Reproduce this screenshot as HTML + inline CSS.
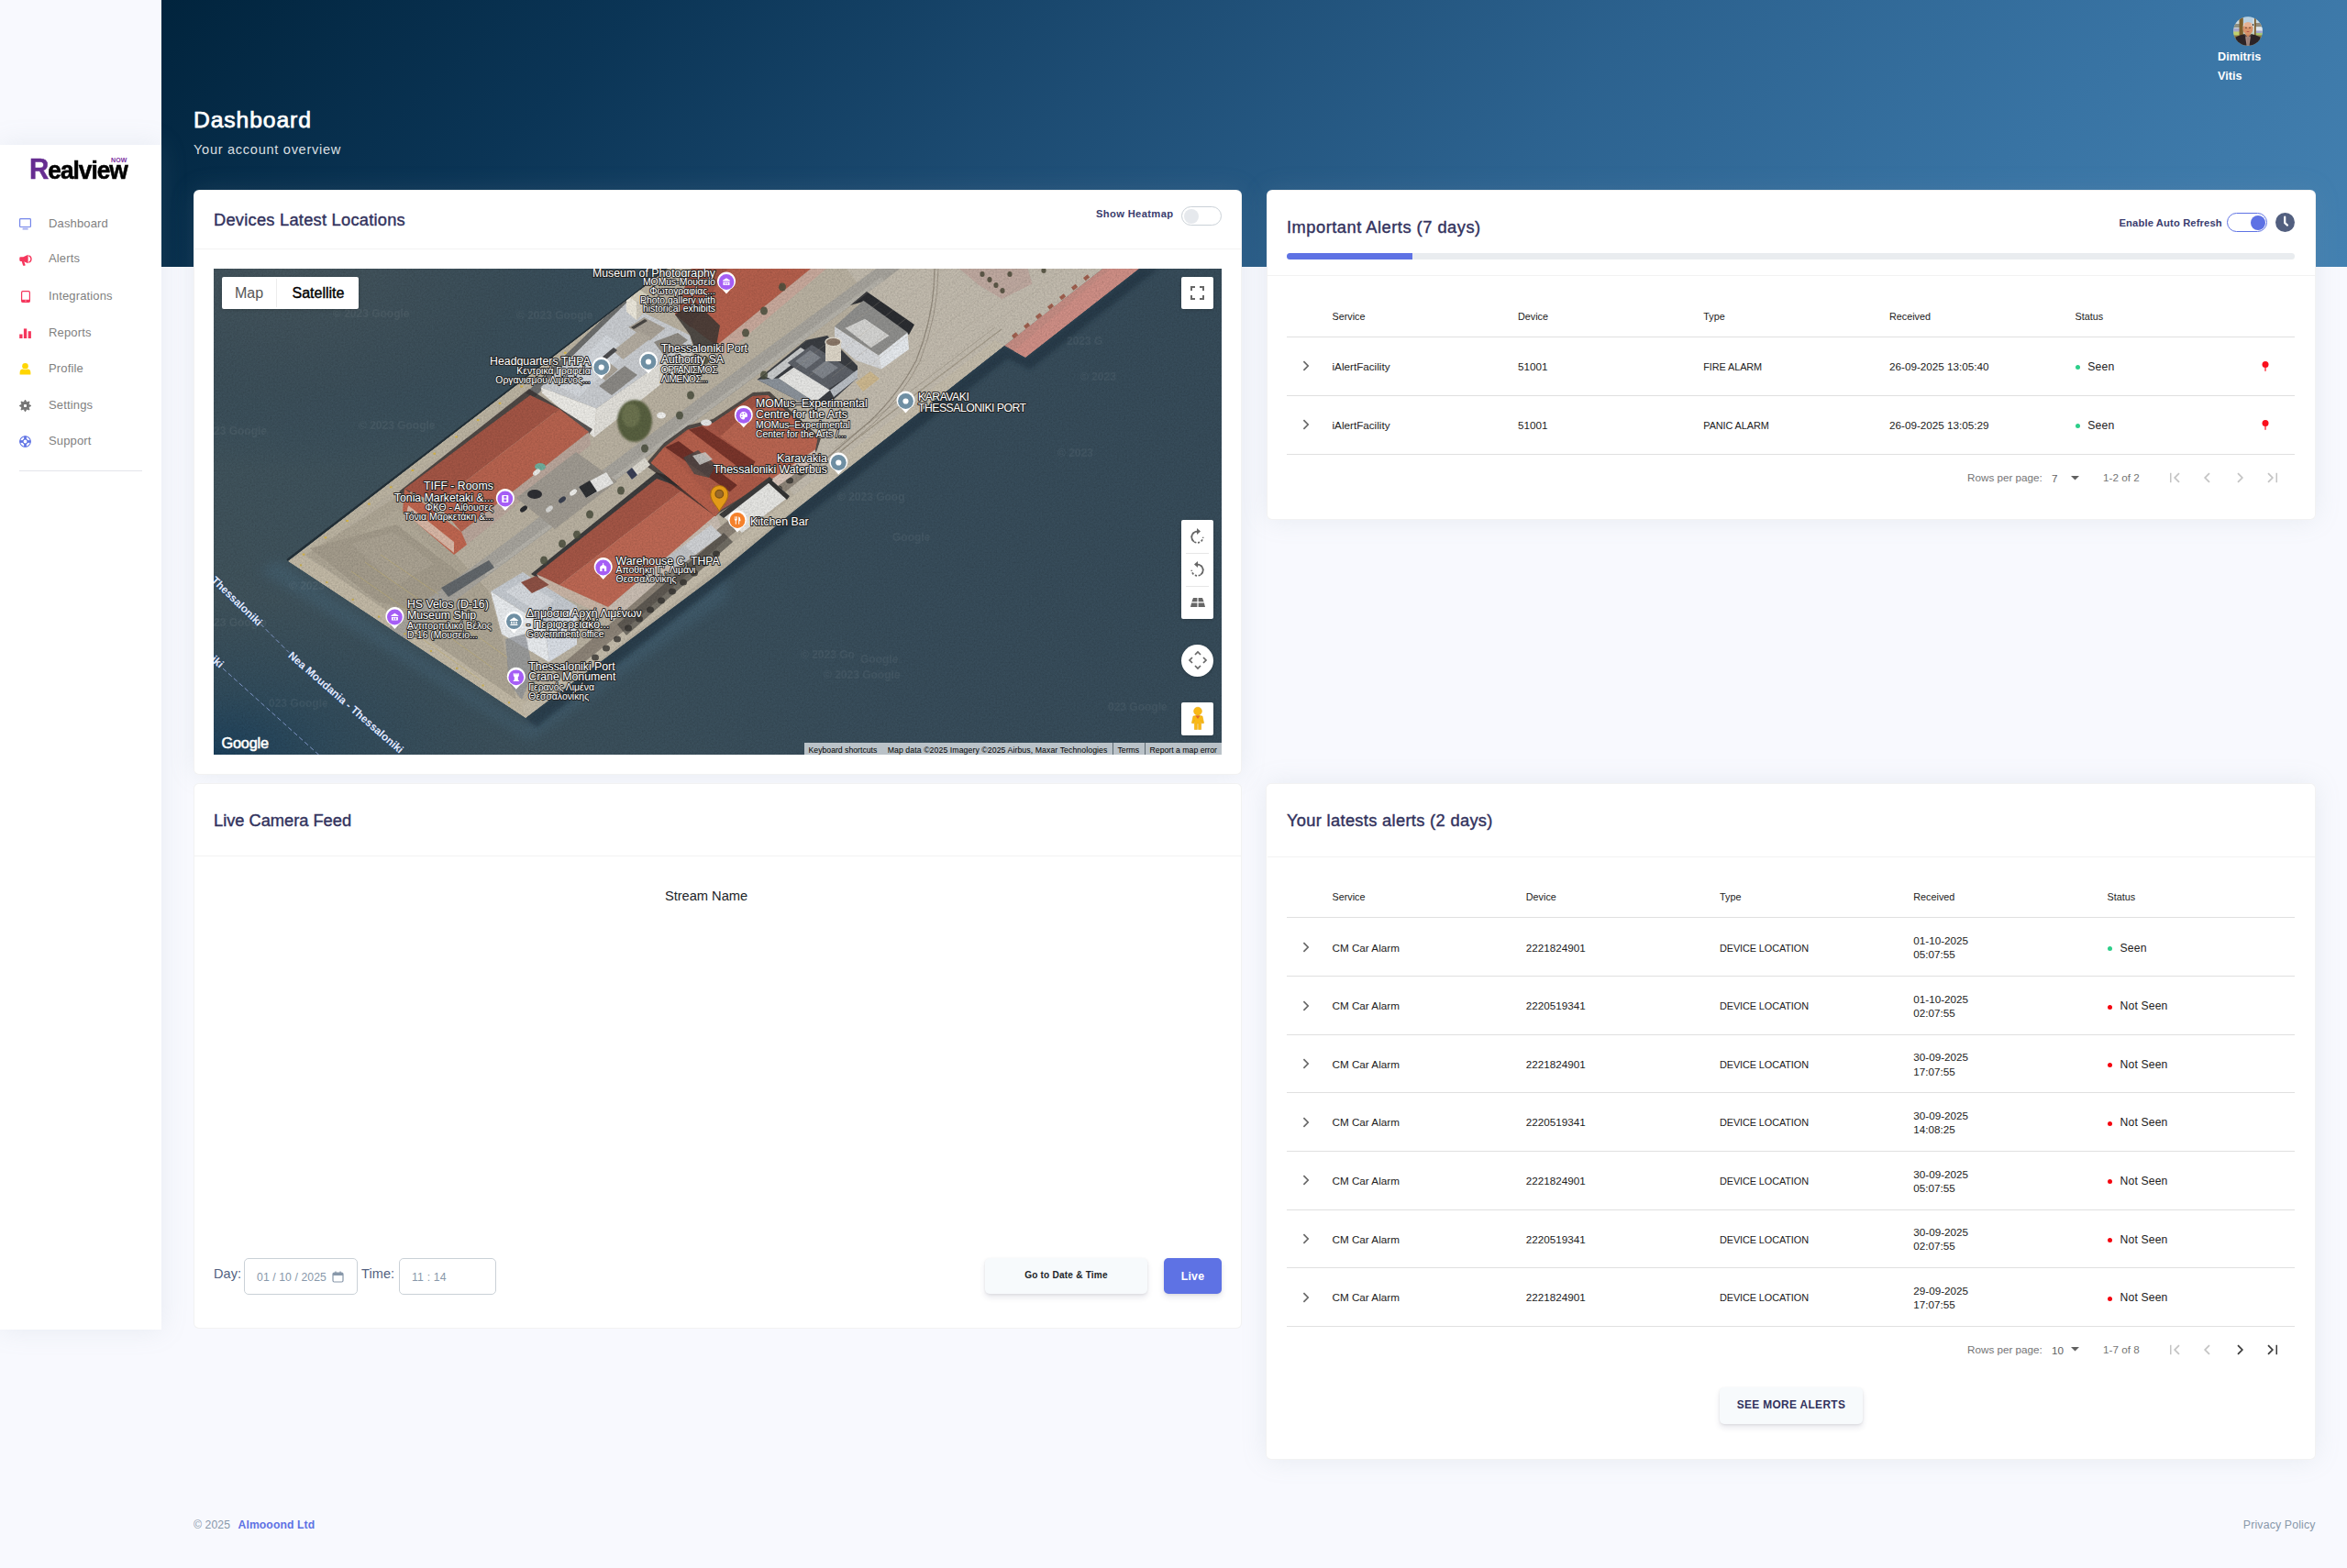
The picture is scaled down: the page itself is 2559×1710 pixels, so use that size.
<!DOCTYPE html><html lang="en"><head><meta charset="utf-8"><title>Dashboard</title><style>
*{box-sizing:border-box}
html,body{margin:0;padding:0}
body{width:2559px;height:1710px;position:relative;overflow:hidden;background:#f8f9fe;
 font-family:"Liberation Sans","DejaVu Sans",sans-serif;color:#212121;-webkit-font-smoothing:antialiased}
.abs{position:absolute}
.t{position:absolute;white-space:nowrap;line-height:1}
#hdr{left:176px;top:0;width:2383px;height:291px;background:linear-gradient(135deg,#01243d 0%,#0b3556 19.9%,#1d4c73 40.7%,#2c628f 61.5%,#3873a3 81.4%,#3e7aaa 90.5%,#4481b1 100%)}
#side{left:0;top:158px;width:176px;height:1292px;background:#fff;box-shadow:0 0 28px 0 rgba(136,152,170,.15)}
.card{position:absolute;background:#fff;border:1px solid rgba(0,0,0,.05);border-radius:6px}
.shd{position:absolute;border-radius:6px;box-shadow:0 0 28px 0 rgba(136,152,170,.15)}
.hline{position:absolute;height:1px;background:rgba(0,0,0,.05)}
.rline{position:absolute;height:1px;background:rgba(0,0,0,.12)}
.h2{font-size:18px;font-weight:bold;color:#32325d;letter-spacing:-.1px}
.nav{font-size:13px;color:#7f7f7f;letter-spacing:.15px}
.th{font-size:10.8px;color:#212121;letter-spacing:0}
.td{font-size:11.7px;color:#212121;letter-spacing:0}
.up{font-size:10.9px;letter-spacing:-.1px}
.st{font-size:12.2px;color:#212121;letter-spacing:.15px}
.pg{font-size:11.7px;color:#757575;letter-spacing:0}
.dot{position:absolute;width:5px;height:5px;border-radius:50%}
svg{position:absolute;overflow:visible}
</style></head><body>
<div id="hdr" class="abs"></div>
<div class="t " style="left:211px;top:131px;transform:translateY(-50%);font-size:24.700px;color:#fff;letter-spacing:.9px;-webkit-text-stroke:.75px #fff">Dashboard</div>
<div class="t " style="left:211px;top:163px;transform:translateY(-50%);font-size:14.6px;color:rgba(255,255,255,.86);letter-spacing:.7px">Your account overview</div>
<svg style="left:2435px;top:17.600px" width="32" height="32" viewBox="0 0 32 32">
<defs><clipPath id="avc"><circle cx="16" cy="16" r="15.800"/></clipPath>
<linearGradient id="avbg" x1="0" y1="0" x2="0" y2="1"><stop offset="0" stop-color="#c9dbe6"/><stop offset=".45" stop-color="#cfd8d4"/><stop offset=".7" stop-color="#b4c3a0"/></linearGradient></defs>
<g clip-path="url(#avc)">
<rect width="32" height="32" fill="url(#avbg)"/>
<rect x="0" y="8" width="7" height="4" fill="#8c8f84"/><rect x="24" y="7" width="8" height="4" fill="#8f8a7c"/>
<rect x="0" y="13" width="7" height="4" fill="#a9a7c9"/><rect x="0" y="16.500" width="7" height="4.500" fill="#bfd06e"/>
<rect x="25" y="12" width="7" height="4" fill="#dfe6ef"/><rect x="25" y="15.500" width="7" height="3" fill="#a3a4cf"/><rect x="24.500" y="18" width="7.500" height="3.500" fill="#a9c774"/>
<rect x="11" y="1" width="10" height="6" fill="#b7d0e2"/>
<rect x="6.500" y="0" width="4.300" height="23" fill="#7d5f2c"/><rect x="23" y="0" width="1.700" height="23" fill="#7a5a2a"/>
<rect x="19.500" y="8.200" width="2.600" height="1.800" fill="#141414"/>
<rect x="0" y="20.500" width="32" height="3" fill="#8a7444"/>
<rect x="13.400" y="17" width="5.200" height="5.500" fill="#c67f57"/>
<ellipse cx="16" cy="13.300" rx="5.500" ry="6.700" fill="#d7936a"/>
<ellipse cx="16" cy="9" rx="4.500" ry="2.700" fill="#e6b192"/>
<path d="M10.700 11 Q10.600 8.600 12 7.600 L12.300 9.200 Q11.300 9.800 11.400 11Z M21.300 11 Q21.400 8.600 20 7.600 L19.700 9.200 Q20.700 9.800 20.600 11Z" fill="#ddd7d2"/>
<rect x="13" y="11.800" width="1.900" height=".9" fill="#5a3828"/><rect x="17.100" y="11.800" width="1.900" height=".9" fill="#5a3828"/>
<rect x="14.500" y="16.100" width="3" height=".9" rx=".4" fill="#b9574c"/>
<path d="M12.600 19.300 L16 22.400 L19.400 19.300 L20.200 32 H11.800Z" fill="#a78a82"/>
<path d="M12.800 19.600 L14.800 21.700 L13.600 22.600Z M19.200 19.600 L17.200 21.700 L18.400 22.600Z" fill="#3a3236"/>
<path d="M1 32 L2.600 22.600 Q8 19.800 12.600 19.100 L14.600 32Z M31 32 L29.400 22.600 Q24 19.800 19.400 19.100 L17.400 32Z" fill="#2c2326"/>
<rect x="15.500" y="23" width="1" height="9" fill="#8d746e"/>
</g></svg>
<div class="t " style="left:2418px;top:62px;transform:translateY(-50%);font-size:12.600px;font-weight:bold;color:#fff;letter-spacing:.05px">Dimitris</div>
<div class="t " style="left:2418px;top:83px;transform:translateY(-50%);font-size:12.600px;font-weight:bold;color:#fff;letter-spacing:.05px">Vitis</div>
<div id="side" class="abs"></div>
<div class="t" style="left:31.700px;top:163.700px;font-size:32px;font-weight:bold;letter-spacing:-1.1px;transform:scaleX(.922);transform-origin:0 0;line-height:40px"><span style="color:#662d91;font-size:32px;-webkit-text-stroke:.5px #662d91">R</span><span style="color:#000;font-size:28.500px;-webkit-text-stroke:.6px #000">ealview</span></div>
<div class="t" style="left:121px;top:171px;font-size:7px;font-weight:bold;color:#7b2fa0;letter-spacing:.1px">NOW</div>
<div class="t nav" style="left:53px;top:243px;transform:translateY(-50%);">Dashboard</div>
<div class="t nav" style="left:53px;top:281.3px;transform:translateY(-50%);">Alerts</div>
<div class="t nav" style="left:53px;top:322.3px;transform:translateY(-50%);">Integrations</div>
<div class="t nav" style="left:53px;top:362px;transform:translateY(-50%);">Reports</div>
<div class="t nav" style="left:53px;top:400.5px;transform:translateY(-50%);">Profile</div>
<div class="t nav" style="left:53px;top:441px;transform:translateY(-50%);">Settings</div>
<div class="t nav" style="left:53px;top:479.7px;transform:translateY(-50%);">Support</div>
<svg style="left:21px;top:238px" width="13" height="13" viewBox="0 0 13 13"><rect x=".6" y=".6" width="11.8" height="8.900" rx=".8" fill="none" stroke="#7486ea" stroke-width="1.2"/><rect x="3.600" y="10.700" width="6" height="1.800" fill="#9fa9ee"/></svg>
<svg style="left:20.500px;top:277.300px" width="14.500" height="13.500" viewBox="0 0 14 13"><path d="M0.3 4.2 Q0.3 3.2 1.3 3.2 H4.2 L9.3 0.6 V10 L4.2 7.6 H1.3 Q0.3 7.6 0.3 6.6Z" fill="#f5365c"/><path d="M2.6 7.6 H5 L6.4 11.6 Q6.5 12.3 5.8 12.3 H4.6 Q4.1 12.3 3.9 11.8Z" fill="#f5365c"/><path d="M10 1.2 Q13.2 2 13.2 5.3 Q13.2 8.6 10 9.4 V8 Q11.9 7.3 11.9 5.3 Q11.9 3.3 10 2.6Z" fill="#f5365c"/></svg>
<svg style="left:23px;top:317.300px" width="10" height="13" viewBox="0 0 10 13"><rect x=".6" y=".6" width="8.8" height="11.8" rx="1.3" fill="none" stroke="#f5365c" stroke-width="1.2"/><rect x=".6" y="9.8" width="8.8" height="2.6" fill="#f5365c"/><circle cx="5" cy="11.1" r=".6" fill="#fff"/></svg>
<svg style="left:21px;top:356.300px" width="13" height="13" viewBox="0 0 13 13"><rect x=".2" y="8.500" width="3.300" height="4.500" fill="#f5365c"/><rect x="4.900" y="2.400" width="3.300" height="10.600" fill="#f5365c"/><rect x="9.700" y="5.200" width="3.200" height="7.800" fill="#f5365c"/></svg>
<svg style="left:21px;top:395.300px" width="13" height="14" viewBox="0 0 13 14"><circle cx="6.500" cy="4.200" r="3.300" fill="#ffd600"/><path d="M0.6 13.4 V11.6 Q0.6 7.8 4 7.6 Q6.5 8.8 9 7.6 Q12.4 7.8 12.4 11.6 V13.4Z" fill="#ffd600"/></svg>
<svg style="left:21.200px;top:435.700px" width="13" height="13" viewBox="-6.5 -6.5 13 13"><polygon points="0.00,-6.40 1.49,-3.60 4.53,-4.53 3.60,-1.49 6.40,0.00 3.60,1.49 4.53,4.53 1.49,3.60 0.00,6.40 -1.49,3.60 -4.53,4.53 -3.60,1.49 -6.40,0.00 -3.60,-1.49 -4.53,-4.53 -1.49,-3.60" fill="#757575" stroke="#757575" stroke-width=".9" stroke-linejoin="round"/><rect x="-1.500" y="-1.500" width="3" height="3" rx=".7" fill="#fff"/></svg>
<svg style="left:21.200px;top:474.800px" width="13" height="13" viewBox="-6.5 -6.5 13 13"><circle r="5.800" fill="none" stroke="#5e72e4" stroke-width="1.100"/><circle r="2.500" fill="none" stroke="#5e72e4" stroke-width="1.100"/><g fill="#5e72e4"><rect x="-1.350" y="-5.900" width="2.700" height="3.400"/><rect x="-1.350" y="2.500" width="2.700" height="3.400"/><rect x="-5.900" y="-1.350" width="3.400" height="2.700"/><rect x="2.500" y="-1.350" width="3.400" height="2.700"/></g></svg>
<div class="abs" style="left:21px;top:513px;width:134px;height:1px;background:#e3e5ea"></div>
<div class="shd" style="left:211px;top:207px;width:1143px;height:638px"></div><div class="shd" style="left:1381px;top:207px;width:1144px;height:360px"></div><div class="shd" style="left:1380px;top:854px;width:1145px;height:738px"></div>
<div class="card" style="left:211px;top:207px;width:1143px;height:638px"></div>
<div class="hline" style="left:212px;top:271px;width:1141px"></div>
<div class="t h2" style="left:233px;top:239.5px;transform:translateY(-50%);font-weight:normal;font-size:18.3px;letter-spacing:.24px;-webkit-text-stroke:.4px #32325d">Devices Latest Locations</div>
<div class="t " style="left:1195px;top:234px;transform:translateY(-50%);font-size:11.2px;font-weight:bold;color:#3a3c6e;letter-spacing:.35px">Show Heatmap</div>
<div class="abs" style="left:1288px;top:225px;width:44px;height:21px;border:1px solid #cad1d7;border-radius:11px;background:#fff"></div>
<div class="abs" style="left:1291px;top:227.500px;width:16px;height:16px;border-radius:50%;background:#e6e9ed"></div>
<div class="abs" id="map" style="left:233px;top:293px;width:1099px;height:530px;overflow:hidden;background:#374c5a">
<svg width="1099" height="530" viewBox="0 0 1099 530" style="left:0;top:0;overflow:hidden" font-family="Liberation Sans, DejaVu Sans, sans-serif">
<defs>
<linearGradient id="wg" x1="0" y1="0" x2="1" y2="0"><stop offset="0" stop-color="#40535c"/><stop offset=".4" stop-color="#3b505c"/><stop offset=".7" stop-color="#384d5b"/><stop offset="1" stop-color="#374c5a"/></linearGradient>
<radialGradient id="wtl" cx="0.12" cy="0.0" r="0.55"><stop offset="0" stop-color="#45555d" stop-opacity="1"/><stop offset=".6" stop-color="#3b4e59" stop-opacity=".7"/><stop offset="1" stop-color="#31495a" stop-opacity="0"/></radialGradient>
<radialGradient id="wbl" cx="0.0" cy="1.0" r="0.62"><stop offset="0" stop-color="#1b405c" stop-opacity="1"/><stop offset=".4" stop-color="#25465c" stop-opacity=".55"/><stop offset="1" stop-color="#2c4759" stop-opacity="0"/></radialGradient>
<linearGradient id="shore" x1="0" y1="0" x2="1" y2="1"><stop offset="0" stop-color="#547381" stop-opacity=".9"/><stop offset="1" stop-color="#31586e" stop-opacity="0"/></linearGradient>
<clipPath id="pier"><polygon points="81,319 495,0 1009,0 885,97 862,84 632,265 550,333 340,490"/></clipPath>
<filter id="bl2" x="-10%" y="-10%" width="120%" height="120%"><feGaussianBlur stdDeviation="2"/></filter>
<filter id="bl1" x="-10%" y="-10%" width="120%" height="120%"><feGaussianBlur stdDeviation=".8"/></filter>
<filter id="bl5" x="-20%" y="-20%" width="140%" height="140%"><feGaussianBlur stdDeviation="6"/></filter>
<filter id="noise" x="0" y="0" width="100%" height="100%"><feTurbulence type="fractalNoise" baseFrequency=".55" numOctaves="2" seed="7" result="n"/><feColorMatrix in="n" type="matrix" values="0 0 0 0 0  0 0 0 0 0  0 0 0 0 0  .9 .9 .9 0 -1.05"/></filter>
</defs>
<rect width="1099" height="530" fill="url(#wg)"/>
<rect width="700" height="400" fill="url(#wtl)"/>
<rect x="0" y="250" width="520" height="280" fill="url(#wbl)"/>
<polygon points="70,318 340,500 560,335 560,360 345,515 50,330" fill="#46697e" opacity=".4" filter="url(#bl5)"/>
<polygon points="340,490 862,84 885,97 1009,0 1030,0 890,110 866,98 352,500" fill="#1d2f3c" opacity=".55" filter="url(#bl2)"/>
<path d="M80 318 L495 0" stroke="#1a242b" stroke-width="2.500" opacity=".7"/>
<g clip-path="url(#pier)">
<polygon points="81,319 495,0 969,0 862,84 632,265 550,333 340,490" fill="#b9b1a1" />
<polygon points="969,0 1009,0 885,97 862,84" fill="#c68d84" />
<polygon points="978,0 1009,0 885,97 872,90" fill="#cf8f86" />
<polygon points="690,0 969,0 862,84 640,258 600,200 735,60" fill="#c2bbae" />
<polygon points="813,0 887.5,0 892.5,16.6 859.3,33 834.4,18" fill="#bfa9a0" />
<polygon points="81,319 495,0 512,0 98,317" fill="#bcb4a2" />
<polygon points="81,319 340,490 352,480 96,311" fill="#c2b9a6" />
<polygon points="340,490 862,84 852,78 336,476" fill="#c4bcab" />
<polygon points="100,312 205,245 262,310 300,352 314,400 330,470 336,474" fill="#aea695" />
<polygon points="120,318 200,262 250,318 180,368" fill="#b2aa99" />
<polygon points="105,305 199,279 281,342 234,377 178,363" fill="#a49c8c" />
<polygon points="150,300 196,287 240,322 200,345" fill="#aaa292" />
<polygon points="200,410 296,337 527,165 735,10 748,0 722,0 527,143 296,315 190,392" fill="#a7a49d" />
<polygon points="296,331 527,159 728,9 731,13 527,164 296,336" fill="#b5b2aa" />
<polygon points="548,84 651,0 668,0 553,97" fill="#c8a99c" />
<polygon points="521,0 651,0 548,84 503,50" fill="#b45f4c" />
<polygon points="521,0 560,0 520,64 503,50" fill="#a35444" />
<polygon points="503,50 525,36 552,62 548,84 524,86 519,72" fill="#3c3835" opacity=".85"/>
<polygon points="340,136 450,30 456,36 350,140" fill="#5a5e62" opacity=".8"/>
<polygon points="356.7,129.3 417.3,152.4 414.8,183.9 357.9,135.4" fill="#ecebe6" />
<polygon points="417.3,152.4 486.3,104 486.3,127 414.8,183.9" fill="#e2e0da" />
<polygon points="486.3,104 521.4,82 521.4,98 486.3,127" fill="#d6d4ce" />
<polygon points="356.7,129.3 450,37.3 469.3,48.2 519,72.4 521.4,82 486.3,104 417.3,152.4" fill="#c9ccd0" />
<polygon points="372,126 428,72 452,88 398,140" fill="#d3d7dc" />
<polygon points="452.4,64 469.3,53 492.4,65 475.4,78.5" fill="#a9a297" />
<polygon points="435.4,89.4 463.3,67.6 476.6,76 446.3,99" fill="#b3aca0" />
<polygon points="410,108 424,97 441,110 427,122" fill="#aaa398" />
<polygon points="480,80 506,70 517,78 492,96" fill="#8f8b84" />
<polygon points="420,128 448,106 462,116 434,138" fill="#8b8985" />
<polygon points="424,96 436,86 440,89 428,99" fill="#4c4c4e" />
<polygon points="455,64 470,55 473,57 458,66" fill="#4a4744" />
<polygon points="450,28.8 461,36 461,56 450,47" fill="#ebe7db" />
<polygon points="461,36 473,28.8 469.3,48.2 461,56" fill="#cfcabd" />
<polygon points="450,28.8 462,21.5 473,28.8 461,36" fill="#d9d3c1" />
<ellipse cx="459" cy="166" rx="19" ry="23" fill="#59603f" filter="url(#bl1)"/>
<ellipse cx="455" cy="160" rx="10" ry="13" fill="#6c7350" filter="url(#bl1)"/>
<polygon points="202,243 344,131 413,175 409,181 345,140 209,248" fill="#332e2e" opacity=".8"/>
<polygon points="270,287 409,178 411,192 276,301" fill="#b9a69b" />
<polygon points="208,240 270,287 276,301 262,312 206,264" fill="#bf6650" />
<polygon points="212,258 262,298 262,310 210,268" fill="#d8b7a6" />
<polygon points="208,240 345,138 377,153 243,256" fill="#a35545" />
<polygon points="243,256 377,153 409,178 270,287" fill="#b7634f" />
<polygon points="330,250 395,200 440,232 372,284" fill="#9f9a91" />
<polygon points="346,333 483,222 521,235 516,241 483,231 354,338" fill="#26282c" opacity=".85"/>
<polygon points="430,369 548,268 553,281 436,384" fill="#c9bdb2" />
<polygon points="352,333 377,345 430,369 434,382 360,348" fill="#c9b5a6" />
<polygon points="352,333 483,229 513,240 377,345" fill="#a45646" />
<polygon points="377,345 513,240 548,268 430,369" fill="#bd6854" />
<polygon points="436,384 553,281 640,212 650,222 560,294 446,396 380,448 372,438" fill="#7d746a" opacity=".75"/>
<polygon points="440,388 556,288 566,298 450,400" fill="#3f3d3a" opacity=".6"/>
<ellipse cx="452" cy="392" rx="4" ry="3.500" fill="#2f2e2b" opacity=".75"/>
<ellipse cx="464" cy="382" rx="4" ry="3.500" fill="#2f2e2b" opacity=".75"/>
<ellipse cx="476" cy="372" rx="4" ry="3.500" fill="#2f2e2b" opacity=".75"/>
<ellipse cx="488" cy="362" rx="4" ry="3.500" fill="#2f2e2b" opacity=".75"/>
<ellipse cx="500" cy="352" rx="4" ry="3.500" fill="#2f2e2b" opacity=".75"/>
<ellipse cx="512" cy="342" rx="4" ry="3.500" fill="#2f2e2b" opacity=".75"/>
<ellipse cx="524" cy="332" rx="4" ry="3.500" fill="#2f2e2b" opacity=".75"/>
<ellipse cx="536" cy="321" rx="4" ry="3.500" fill="#2f2e2b" opacity=".75"/>
<ellipse cx="548" cy="311" rx="4" ry="3.500" fill="#2f2e2b" opacity=".75"/>
<ellipse cx="440" cy="404" rx="4" ry="3.500" fill="#2f2e2b" opacity=".75"/>
<ellipse cx="428" cy="414" rx="4" ry="3.500" fill="#2f2e2b" opacity=".75"/>
<ellipse cx="416" cy="424" rx="4" ry="3.500" fill="#2f2e2b" opacity=".75"/>
<ellipse cx="404" cy="433" rx="4" ry="3.500" fill="#2f2e2b" opacity=".75"/>
<ellipse cx="640" cy="222" rx="4" ry="3.500" fill="#2f2e2b" opacity=".75"/>
<ellipse cx="628" cy="231" rx="4" ry="3.500" fill="#2f2e2b" opacity=".75"/>
<ellipse cx="616" cy="240" rx="4" ry="3.500" fill="#2f2e2b" opacity=".75"/>
<polygon points="470,214 491,190 517,171 544.5,164 588,135 606,134 662,185 657,200 607.5,233 551.8,266 547,270" fill="#2f2a29" opacity=".75"/>
<polygon points="476.7,211.8 491.2,194.8 516.7,175.5 544.5,168.2 588,139 604,138 658.4,185 656,197.3 607.5,230 551.8,263.9 547,270" fill="#ad5b49" />
<polygon points="544.5,168.2 588,139 604,138 552,183" fill="#a35444" />
<polygon points="552,183 604,138 658.4,185 656,197.3 607.5,230 582,224 590.6,210.6" fill="#b96551" />
<polygon points="476.7,211.8 491.2,194.8 554,262 547,270" fill="#b6604c" />
<polygon points="492.4,194.8 507,188 571,236 562.7,243.3" fill="#6f3028" />
<polygon points="507,188 517.9,175.5 582,224 571,236" fill="#b6614d" />
<polygon points="517.9,175.5 532.4,171.8 590.6,210.6 582,224" fill="#7a352b" />
<polygon points="532.4,171.8 544.5,168.2 552,183 590.6,210.6" fill="#a85747" />
<polygon points="512,206 528,198 548,214 540,228 524,224" fill="#4a4a48" opacity=".8"/>
<polygon points="522,204 536,200 544,208 530,214" fill="#cfcfcb" opacity=".85"/>
<polygon points="607.5,230 656,197.3 657,207 611,240" fill="#d9c5ba" />
<polygon points="694,40 712,25 764,61 758,72 708,36" fill="#2b2d31" />
<polygon points="677,63 725,94.5 728,109.4 700,100 677,80" fill="#d6d8db" />
<polygon points="725,94.5 756.5,69.6 758,88 728,109.4" fill="#e6eaee" />
<polygon points="677,63 708.4,34.8 756.5,69.6 725,94.5" fill="#8f8f8d" />
<polygon points="688.5,64.7 710,54.7 736.6,73 716.7,86.2" fill="#d4d4d2" />
<polygon points="592.6,121 645.6,78 669,73 702,106 702,119 669,149 655,153" fill="#3a3d42" />
<polygon points="592.6,121 615.8,119.4 655.6,146 655,153" fill="#8c939b" />
<polygon points="600,117 640,86 648,91 609,121" fill="#c9cbcc" />
<polygon points="625.7,102.8 652.3,82.9 698.7,112.7 668.8,132.6" fill="#5d6168" />
<polygon points="634,101 650,89 662,97 646,109" fill="#80858c" />
<polygon points="652,112 668,100 681,108 664,120" fill="#80858c" />
<polygon points="615.8,119.4 632.4,107.8 672,132.6 655.6,146" fill="#e6e6e4" />
<polygon points="672,132.6 702,110 702,119 676,140" fill="#b9bec4" />
<rect x="667" y="80" width="17" height="21" fill="#ddd6c8"/><ellipse cx="675.500" cy="80" rx="8.500" ry="4.800" fill="#8a7768"/><ellipse cx="675.500" cy="80" rx="8.500" ry="4.800" fill="none" stroke="#e5dfd2" stroke-width="1.500"/>
<polygon points="700,124 716,112 726,120 708,134" fill="#cdb88f" />
<polygon points="302,352 361,389 365.6,429 314,398.6" fill="#e9ecef" />
<polygon points="361,389 396,368 396,410 365.6,429" fill="#d9dee5" />
<polygon points="302,352 337,331 396,368 361,389" fill="#c5cad0" />
<polygon points="318,352 338,340 372,362 352,374" fill="#d5d9de" />
<polygon points="335,342 351.5,335 365.6,344.7 347,354" fill="#8d5145" />
<polygon points="318,404 340,398 348,440 336,470 322,452" fill="#8b9095" opacity=".7"/>
<polygon points="248,348 300,318 306,326 256,358" fill="#62676b" />
<polygon points="513,301.4 542,279.6 554,290.5 525,312.3" fill="#cfd1d4" />
<polygon points="490,318 513,301.4 525,312.3 502,329" fill="#c1c3c6" />
<polygon points="556.6,271 607.5,230 628,248 576,288" fill="#e6e6e3" />
<polygon points="551,268 606,227 610,230 556,272" fill="#3d3d3d" />
<polygon points="607.5,230 628,248 625,252 604,233" fill="#333" />
<polygon points="398,238 428,222 436,234 406,250" fill="#e8e8e6" />
<polygon points="398,238 410,231 418,243 406,250" fill="#2e3033" />
<polygon points="450,222 470,206 476,214 456,230" fill="#dedbd2" />
<polygon points="450,222 456,217 462,225 456,230" fill="#3a3f55" />
<ellipse cx="356" cy="216" rx="6" ry="4" fill="#6fae9c"/><ellipse cx="350" cy="246" rx="8" ry="5" fill="#2e2f33"/>
<ellipse cx="488" cy="160" rx="5" ry="3.500" fill="#f0f0ee"/><ellipse cx="537" cy="168" rx="6" ry="3.500" fill="#e6e6e6"/>
<ellipse cx="536" cy="100" rx="4" ry="4.500" fill="#4a4f3d" opacity=".85"/>
<ellipse cx="520" cy="138" rx="4" ry="4.500" fill="#4a4f3d" opacity=".85"/>
<ellipse cx="508" cy="160" rx="4" ry="4.500" fill="#4a4f3d" opacity=".85"/>
<ellipse cx="470" cy="196" rx="4" ry="4.500" fill="#4a4f3d" opacity=".85"/>
<ellipse cx="410" cy="268" rx="4" ry="4.500" fill="#4a4f3d" opacity=".85"/>
<ellipse cx="396" cy="290" rx="4" ry="4.500" fill="#4a4f3d" opacity=".85"/>
<ellipse cx="380" cy="300" rx="4" ry="4.500" fill="#4a4f3d" opacity=".85"/>
<ellipse cx="360" cy="318" rx="4" ry="4.500" fill="#4a4f3d" opacity=".85"/>
<ellipse cx="620" cy="20" rx="4" ry="4.500" fill="#4a4f3d" opacity=".85"/>
<ellipse cx="600" cy="46" rx="4" ry="4.500" fill="#4a4f3d" opacity=".85"/>
<ellipse cx="580" cy="70" rx="4" ry="4.500" fill="#4a4f3d" opacity=".85"/>
<ellipse cx="600" cy="116" rx="4" ry="4.500" fill="#4a4f3d" opacity=".85"/>
<ellipse cx="444" cy="242" rx="4" ry="4.500" fill="#4a4f3d" opacity=".85"/>
<rect x="948" y="10.0" width="6" height="4" fill="#a0604f" transform="rotate(-38 948 10.0)"/>
<rect x="935" y="20.5" width="6" height="4" fill="#a0604f" transform="rotate(-38 935 20.5)"/>
<rect x="922" y="31.0" width="6" height="4" fill="#a0604f" transform="rotate(-38 922 31.0)"/>
<rect x="909" y="41.5" width="6" height="4" fill="#a0604f" transform="rotate(-38 909 41.5)"/>
<rect x="896" y="52.0" width="6" height="4" fill="#a0604f" transform="rotate(-38 896 52.0)"/>
<rect x="883" y="62.5" width="6" height="4" fill="#a0604f" transform="rotate(-38 883 62.5)"/>
<rect x="870" y="73.0" width="6" height="4" fill="#a0604f" transform="rotate(-38 870 73.0)"/>
<rect x="96.8" y="310.6" width="2.6" height="2" fill="#d6b548"/><rect x="120.6" y="292.3" width="2.6" height="2" fill="#d6b548"/><rect x="144.3" y="274.0" width="2.6" height="2" fill="#d6b548"/><rect x="168.1" y="255.6" width="2.6" height="2" fill="#d6b548"/><rect x="191.9" y="237.3" width="2.6" height="2" fill="#d6b548"/><rect x="215.6" y="219.0" width="2.6" height="2" fill="#d6b548"/><rect x="239.4" y="200.7" width="2.6" height="2" fill="#d6b548"/><rect x="263.2" y="182.4" width="2.6" height="2" fill="#d6b548"/><rect x="286.9" y="164.1" width="2.6" height="2" fill="#d6b548"/><rect x="310.7" y="145.8" width="2.6" height="2" fill="#d6b548"/><rect x="334.4" y="127.5" width="2.6" height="2" fill="#d6b548"/><rect x="358.2" y="109.2" width="2.6" height="2" fill="#d6b548"/><rect x="382.0" y="90.8" width="2.6" height="2" fill="#d6b548"/><rect x="93.9" y="322.4" width="2.2" height="2" fill="#cbb050"/><rect x="122.3" y="341.1" width="2.2" height="2" fill="#cbb050"/><rect x="150.6" y="359.8" width="2.2" height="2" fill="#cbb050"/><rect x="179.0" y="378.6" width="2.2" height="2" fill="#cbb050"/><rect x="207.4" y="397.3" width="2.2" height="2" fill="#cbb050"/><rect x="235.8" y="416.0" width="2.2" height="2" fill="#cbb050"/><rect x="264.1" y="434.8" width="2.2" height="2" fill="#cbb050"/><rect x="292.5" y="453.5" width="2.2" height="2" fill="#cbb050"/><rect x="320.9" y="472.2" width="2.2" height="2" fill="#cbb050"/><line x1="150" y1="330" x2="215" y2="375" stroke="#c9b56a" stroke-width=".8" opacity=".55"/><line x1="165" y1="320" x2="230" y2="365" stroke="#c9b56a" stroke-width=".8" opacity=".55"/><line x1="182" y1="312" x2="245" y2="355" stroke="#c9b56a" stroke-width=".8" opacity=".55"/><line x1="215" y1="395" x2="290" y2="448" stroke="#c9b56a" stroke-width=".8" opacity=".55"/><line x1="232" y1="384" x2="305" y2="436" stroke="#c9b56a" stroke-width=".8" opacity=".55"/><line x1="250" y1="374" x2="320" y2="424" stroke="#c9b56a" stroke-width=".8" opacity=".55"/><line x1="720" y1="0" x2="570" y2="118" stroke="#aaa294" stroke-width=".7" opacity=".35"/><line x1="746" y1="0" x2="596" y2="118" stroke="#aaa294" stroke-width=".7" opacity=".35"/><line x1="772" y1="0" x2="622" y2="118" stroke="#aaa294" stroke-width=".7" opacity=".35"/><line x1="798" y1="0" x2="648" y2="118" stroke="#aaa294" stroke-width=".7" opacity=".35"/><line x1="824" y1="0" x2="674" y2="118" stroke="#aaa294" stroke-width=".7" opacity=".35"/><line x1="850" y1="0" x2="700" y2="118" stroke="#aaa294" stroke-width=".7" opacity=".35"/><line x1="876" y1="0" x2="726" y2="118" stroke="#aaa294" stroke-width=".7" opacity=".35"/><line x1="902" y1="0" x2="752" y2="118" stroke="#aaa294" stroke-width=".7" opacity=".35"/><line x1="928" y1="0" x2="778" y2="118" stroke="#aaa294" stroke-width=".7" opacity=".35"/><ellipse cx="838" cy="6" rx="2.6" ry="3" fill="#4b4a38" opacity=".85"/><ellipse cx="846" cy="12" rx="2.6" ry="3" fill="#4b4a38" opacity=".85"/><ellipse cx="853" cy="18" rx="2.6" ry="3" fill="#4b4a38" opacity=".85"/><ellipse cx="860" cy="24" rx="2.6" ry="3" fill="#4b4a38" opacity=".85"/><ellipse cx="868" cy="6" rx="2.6" ry="3" fill="#4b4a38" opacity=".85"/><ellipse cx="905" cy="2" rx="2.6" ry="3" fill="#4b4a38" opacity=".85"/><ellipse cx="352" cy="222" rx="4.5" ry="2.6" fill="#e9e9e7" transform="rotate(-38 352 222)"/><ellipse cx="366" cy="262" rx="4.5" ry="2.6" fill="#d8d8d6" transform="rotate(-38 366 262)"/><ellipse cx="380" cy="252" rx="4.5" ry="2.6" fill="#3b4150" transform="rotate(-38 380 252)"/><ellipse cx="392" cy="244" rx="4.5" ry="2.6" fill="#efefec" transform="rotate(-38 392 244)"/><ellipse cx="338" cy="262" rx="4.5" ry="2.6" fill="#2a2c30" transform="rotate(-38 338 262)"/>
<path d="M786 0 Q786 50 766 100 Q748 135 716 166 L660 214" fill="none" stroke="#8a8173" stroke-width="1.300" opacity=".8"/>
<path d="M790 0 Q790 50 770 101 Q752 137 720 168 L664 217" fill="none" stroke="#8a8173" stroke-width="1" opacity=".6"/>
<path d="M859 66 L683 199" fill="none" stroke="#948b7b" stroke-width="1.200" opacity=".7"/>
<path d="M852 64 L676 197" fill="none" stroke="#948b7b" stroke-width="1" opacity=".5"/>
</g>
<rect width="1099" height="530" filter="url(#noise)" opacity=".14"/>
<path d="M51 387.500 L82 418.500" stroke="#8da2d8" stroke-width="1" stroke-dasharray="5 3" fill="none" opacity=".85"/>
<path d="M10 436 L120 535" stroke="#8da2d8" stroke-width="1" stroke-dasharray="5 3" fill="none" opacity=".85"/>
<text x="0" y="4" text-anchor="end" font-size="11.800" font-weight="bold" fill="#e1e8fb" stroke="#2a4763" stroke-width="2" paint-order="stroke" stroke-linejoin="round" transform="translate(51,387.500) rotate(44)">Thessaloniki</text>
<text x="0" y="4" text-anchor="end" font-size="11.800" font-weight="bold" fill="#e1e8fb" stroke="#2a4763" stroke-width="2" paint-order="stroke" stroke-linejoin="round" transform="translate(9,433) rotate(42)">Thessaloniki</text>
<text x="0" y="4" font-size="11.800" font-weight="bold" fill="#e1e8fb" stroke="#2a4763" stroke-width="2" paint-order="stroke" stroke-linejoin="round" transform="translate(83,420) rotate(41)">Nea Moudania - Thessaloniki</text>
<text x="130" y="53" fill="#ffffff" opacity=".055" font-size="12" font-weight="bold">© 2023 Google</text>
<text x="330" y="55" fill="#ffffff" opacity=".055" font-size="12" font-weight="bold">© 2023 Google</text>
<text x="158" y="175" fill="#ffffff" opacity=".055" font-size="12" font-weight="bold">© 2023 Google</text>
<text x="0" y="181" fill="#ffffff" opacity=".055" font-size="12" font-weight="bold">23 Google</text>
<text x="82" y="350" fill="#ffffff" opacity=".055" font-size="12" font-weight="bold">© 2023</text>
<text x="0" y="390" fill="#ffffff" opacity=".055" font-size="12" font-weight="bold">23 Google</text>
<text x="60" y="478" fill="#ffffff" opacity=".055" font-size="12" font-weight="bold">023 Google</text>
<text x="665" y="447" fill="#ffffff" opacity=".055" font-size="12" font-weight="bold">© 2023 Google</text>
<text x="640" y="425" fill="#ffffff" opacity=".055" font-size="12" font-weight="bold">© 2023 Go</text>
<text x="705" y="430" fill="#ffffff" opacity=".055" font-size="12" font-weight="bold">Google</text>
<text x="930" y="83" fill="#ffffff" opacity=".055" font-size="12" font-weight="bold">2023 G</text>
<text x="920" y="205" fill="#ffffff" opacity=".055" font-size="12" font-weight="bold">© 2023</text>
<text x="945" y="122" fill="#ffffff" opacity=".055" font-size="12" font-weight="bold">© 2023</text>
<text x="680" y="253" fill="#ffffff" opacity=".055" font-size="12" font-weight="bold">© 2023 Goog</text>
<text x="740" y="297" fill="#ffffff" opacity=".055" font-size="12" font-weight="bold">Google</text>
<text x="975" y="482" fill="#ffffff" opacity=".055" font-size="12" font-weight="bold">023 Google</text>
<g transform="translate(559,14.5)"><path d="M0 13 L-4.5 8 A10 10 0 1 1 4.5 8Z" fill="#fff"/><circle r="8.4" fill="#a55ef5"/><path d="M-4 -1.800 L0 -4.200 L4 -1.800 V-.9 H-4Z M-3.500 0 H3.500 V3.600 H-3.500Z" fill="#fff"/><rect x="-1.700" y=".8" width="1.100" height="2" fill="#a55ef5"/><rect x=".6" y=".8" width="1.100" height="2" fill="#a55ef5"/></g>
<g transform="translate(422.7,107.5)"><path d="M0 13 L-4.5 8 A10 10 0 1 1 4.5 8Z" fill="#fff"/><circle r="8.4" fill="#6f8fa3"/><circle r="3.1" fill="#fff"/></g>
<g transform="translate(474,101.5)"><path d="M0 13 L-4.5 8 A10 10 0 1 1 4.5 8Z" fill="#fff"/><circle r="8.4" fill="#6f8fa3"/><circle r="3.1" fill="#fff"/></g>
<g transform="translate(577.8,160.3)"><path d="M0 13 L-4.5 8 A10 10 0 1 1 4.5 8Z" fill="#fff"/><circle r="8.4" fill="#a55ef5"/><path d="M0 -4.200 A4.200 4.200 0 1 0 0 4.200 Q1.200 4.200 1.200 3 Q1.200 1.800 2.400 1.800 H3.200 Q4.200 1.800 4.200 0 A4.200 4.200 0 0 0 0 -4.200Z" fill="#fff"/><circle cx="-1.800" cy="-1.500" r=".8" fill="#a55ef5"/><circle cx="1" cy="-2.200" r=".8" fill="#a55ef5"/><circle cx="-2" cy="1.200" r=".8" fill="#a55ef5"/></g>
<g transform="translate(754.5,144.5)"><path d="M0 13 L-4.5 8 A10 10 0 1 1 4.5 8Z" fill="#fff"/><circle r="8.4" fill="#6f8fa3"/><circle r="3.1" fill="#fff"/></g>
<g transform="translate(681.3,211.5)"><path d="M0 13 L-4.5 8 A10 10 0 1 1 4.5 8Z" fill="#fff"/><circle r="8.4" fill="#6f8fa3"/><circle r="3.1" fill="#fff"/></g>
<g transform="translate(317.8,251)"><path d="M0 13 L-4.5 8 A10 10 0 1 1 4.5 8Z" fill="#fff"/><circle r="8.4" fill="#a55ef5"/><rect x="-3.500" y="-4" width="7" height="8" rx=".8" fill="#fff"/><rect x="-1.500" y="-3" width="3" height="2.500" fill="#a55ef5"/><rect x="-1.500" y=".5" width="3" height="2.500" fill="#a55ef5"/></g>
<g transform="translate(571,274.5)"><path d="M0 13 L-4.5 8 A10 10 0 1 1 4.5 8Z" fill="#fff"/><circle r="8.4" fill="#f5812a"/><path d="M-3.200 -4.200 V-1.200 Q-3.200 0 -2.200 .2 V4.200 H-1.200 V.2 Q-.2 0 -.2 -1.200 V-4.200 H-.9 V-1.400 H-1.400 V-4.200 H-2 V-1.400 H-2.500 V-4.200Z M1.200 4.200 V-4.200 Q3.400 -3.600 3.400 -.6 V.8 H2.200 V4.200Z" fill="#fff"/></g>
<g transform="translate(424.7,326)"><path d="M0 13 L-4.5 8 A10 10 0 1 1 4.5 8Z" fill="#fff"/><circle r="8.4" fill="#a55ef5"/><path d="M-3.500 4 V-1 L0 -3.500 L3.500 -1 V4Z" fill="#fff"/><rect x="-1.200" y="1" width="2.400" height="3" fill="#a55ef5"/><rect x="-.5" y="-5" width="1" height="2" fill="#fff"/></g>
<g transform="translate(197.4,380)"><path d="M0 13 L-4.5 8 A10 10 0 1 1 4.5 8Z" fill="#fff"/><circle r="8.4" fill="#a55ef5"/><path d="M-4 -1.800 L0 -4.200 L4 -1.800 V-.9 H-4Z M-3.500 0 H3.500 V3.600 H-3.500Z" fill="#fff"/><rect x="-1.700" y=".8" width="1.100" height="2" fill="#a55ef5"/><rect x=".6" y=".8" width="1.100" height="2" fill="#a55ef5"/></g>
<g transform="translate(327.4,384.7)"><path d="M0 13 L-4.5 8 A10 10 0 1 1 4.5 8Z" fill="#fff"/><circle r="8.4" fill="#6f8fa3"/><path d="M-4.500 -1.500 L0 -4.500 L4.500 -1.500 V-.6 H-4.500Z M-4 3 H4 V4.200 H-4Z" fill="#fff"/><rect x="-3.300" y="0" width="1.400" height="2.600" fill="#fff"/><rect x="-.7" y="0" width="1.400" height="2.600" fill="#fff"/><rect x="1.900" y="0" width="1.400" height="2.600" fill="#fff"/></g>
<g transform="translate(329.8,445.8)"><path d="M0 13 L-4.5 8 A10 10 0 1 1 4.5 8Z" fill="#fff"/><circle r="8.4" fill="#a55ef5"/><path d="M-3 -4.500 H-1.500 V-3.300 H-.7 V-4.500 H.7 V-3.300 H1.500 V-4.500 H3 V-1.500 L2 -.5 V2.500 L3.500 4.200 H-3.500 L-2 2.500 V-.5 L-3 -1.500Z" fill="#fff"/></g>
<g transform="translate(551.3,249.500)"><path d="M0 15 C-3 9 -9.500 4 -9.500 -3.500 A9.500 9.500 0 0 1 9.500 -3.500 C9.500 4 3 9 0 15Z" fill="#e39a17" stroke="#a9700c" stroke-width="1"/><circle cy="-3.800" r="4.300" fill="#9a6a2a" stroke="#7c5314" stroke-width="1.300"/></g>
<text x="547" y="8.7" text-anchor="end" font-size="12.3" fill="#fff" stroke="#222" stroke-width="2.1" paint-order="stroke" stroke-linejoin="round">Museum of Photography</text>
<text x="547" y="18.2" text-anchor="end" font-size="10.400" fill="#fff" stroke="#222" stroke-width="1.9" paint-order="stroke" stroke-linejoin="round">MOMus-Μουσείο</text>
<text x="547" y="27.7" text-anchor="end" font-size="10.400" fill="#fff" stroke="#222" stroke-width="1.9" paint-order="stroke" stroke-linejoin="round">Φωτογραφίας...</text>
<text x="547" y="37.9" text-anchor="end" font-size="10.400" fill="#fff" stroke="#222" stroke-width="1.9" paint-order="stroke" stroke-linejoin="round">Photo gallery with</text>
<text x="547" y="47.0" text-anchor="end" font-size="10.400" fill="#fff" stroke="#222" stroke-width="1.9" paint-order="stroke" stroke-linejoin="round">historical exhibits</text>
<text x="410.7" y="105.0" text-anchor="end" font-size="12.3" fill="#fff" stroke="#222" stroke-width="2.1" paint-order="stroke" stroke-linejoin="round">Headquarters THPA</text>
<text x="410.7" y="114.9" text-anchor="end" font-size="10.400" fill="#fff" stroke="#222" stroke-width="1.9" paint-order="stroke" stroke-linejoin="round">Κεντρικά Γραφεία</text>
<text x="410.7" y="124.5" text-anchor="end" font-size="10.400" fill="#fff" stroke="#222" stroke-width="1.9" paint-order="stroke" stroke-linejoin="round">Οργανισμού Λιμένος...</text>
<text x="487.7" y="91.4" text-anchor="start" font-size="12.3" fill="#fff" stroke="#222" stroke-width="2.1" paint-order="stroke" stroke-linejoin="round">Thessaloniki Port</text>
<text x="487.7" y="103.4" text-anchor="start" font-size="12.3" fill="#fff" stroke="#222" stroke-width="2.1" paint-order="stroke" stroke-linejoin="round">Authority SA</text>
<text x="487.7" y="114.4" text-anchor="start" letter-spacing="-.55" font-size="10.400" fill="#fff" stroke="#222" stroke-width="1.9" paint-order="stroke" stroke-linejoin="round">ΟΡΓΑΝΙΣΜΟΣ</text>
<text x="487.7" y="123.7" text-anchor="start" letter-spacing="-.55" font-size="10.400" fill="#fff" stroke="#222" stroke-width="1.9" paint-order="stroke" stroke-linejoin="round">ΛΙΜΕΝΟΣ...</text>
<text x="591" y="150.8" text-anchor="start" font-size="12.3" fill="#fff" stroke="#222" stroke-width="2.1" paint-order="stroke" stroke-linejoin="round">MOMus–Experimental</text>
<text x="591" y="163.4" text-anchor="start" font-size="12.3" fill="#fff" stroke="#222" stroke-width="2.1" paint-order="stroke" stroke-linejoin="round">Centre for the Arts</text>
<text x="591" y="174.1" text-anchor="start" font-size="10.400" fill="#fff" stroke="#222" stroke-width="1.9" paint-order="stroke" stroke-linejoin="round">MOMus–Experimental</text>
<text x="591" y="183.7" text-anchor="start" font-size="10.400" fill="#fff" stroke="#222" stroke-width="1.9" paint-order="stroke" stroke-linejoin="round">Center for the Arts /...</text>
<text x="768" y="144.0" text-anchor="start" letter-spacing="-.55" font-size="12.3" fill="#fff" stroke="#222" stroke-width="2.1" paint-order="stroke" stroke-linejoin="round">KARAVAKI</text>
<text x="768" y="156.4" text-anchor="start" letter-spacing="-.55" font-size="12.3" fill="#fff" stroke="#222" stroke-width="2.1" paint-order="stroke" stroke-linejoin="round">THESSALONIKI PORT</text>
<text x="668.8" y="211.4" text-anchor="end" font-size="12.3" fill="#fff" stroke="#222" stroke-width="2.1" paint-order="stroke" stroke-linejoin="round">Karavakia</text>
<text x="668.8" y="223.4" text-anchor="end" font-size="12.3" fill="#fff" stroke="#222" stroke-width="2.1" paint-order="stroke" stroke-linejoin="round">Thessaloniki Waterbus</text>
<text x="304.8" y="241.4" text-anchor="end" font-size="12.3" fill="#fff" stroke="#222" stroke-width="2.1" paint-order="stroke" stroke-linejoin="round">TIFF - Rooms</text>
<text x="304.8" y="253.8" text-anchor="end" font-size="12.3" fill="#fff" stroke="#222" stroke-width="2.1" paint-order="stroke" stroke-linejoin="round">Tonia Marketaki &amp;...</text>
<text x="304.8" y="264.2" text-anchor="end" font-size="10.400" fill="#fff" stroke="#222" stroke-width="1.9" paint-order="stroke" stroke-linejoin="round">ΦΚΘ - Αίθουσες</text>
<text x="304.8" y="273.7" text-anchor="end" font-size="10.400" fill="#fff" stroke="#222" stroke-width="1.9" paint-order="stroke" stroke-linejoin="round">Τόνια Μαρκετάκη &amp;...</text>
<text x="585" y="279.8" text-anchor="start" font-size="12.3" fill="#fff" stroke="#222" stroke-width="2.1" paint-order="stroke" stroke-linejoin="round">Kitchen Bar</text>
<text x="438.6" y="322.6" text-anchor="start" font-size="12.3" fill="#fff" stroke="#222" stroke-width="2.1" paint-order="stroke" stroke-linejoin="round">Warehouse C, THPA</text>
<text x="438.6" y="332.1" text-anchor="start" font-size="10.400" fill="#fff" stroke="#222" stroke-width="1.9" paint-order="stroke" stroke-linejoin="round">Αποθήκη Γ', Λιμάνι</text>
<text x="438.6" y="341.7" text-anchor="start" font-size="10.400" fill="#fff" stroke="#222" stroke-width="1.9" paint-order="stroke" stroke-linejoin="round">Θεσσαλονίκης</text>
<text x="210.9" y="370.4" text-anchor="start" font-size="12.3" fill="#fff" stroke="#222" stroke-width="2.1" paint-order="stroke" stroke-linejoin="round">HS Velos (D-16)</text>
<text x="210.9" y="382.4" text-anchor="start" font-size="12.3" fill="#fff" stroke="#222" stroke-width="2.1" paint-order="stroke" stroke-linejoin="round">Museum Ship</text>
<text x="210.9" y="392.7" text-anchor="start" font-size="10.400" fill="#fff" stroke="#222" stroke-width="1.9" paint-order="stroke" stroke-linejoin="round">Αντιτορπιλικό Βέλος</text>
<text x="210.9" y="402.8" text-anchor="start" font-size="10.400" fill="#fff" stroke="#222" stroke-width="1.9" paint-order="stroke" stroke-linejoin="round">D-16 (Μουσείο...</text>
<text x="340.9" y="379.9" text-anchor="start" font-size="12.3" fill="#fff" stroke="#222" stroke-width="2.1" paint-order="stroke" stroke-linejoin="round">Δημόσια Αρχή Λιμένων</text>
<text x="340.9" y="392.0" text-anchor="start" font-size="12.3" fill="#fff" stroke="#222" stroke-width="2.1" paint-order="stroke" stroke-linejoin="round">- Περιφερειακό...</text>
<text x="340.9" y="402.4" text-anchor="start" font-size="10.400" fill="#fff" stroke="#222" stroke-width="1.9" paint-order="stroke" stroke-linejoin="round">Government office</text>
<text x="343.3" y="437.7" text-anchor="start" font-size="12.3" fill="#fff" stroke="#222" stroke-width="2.1" paint-order="stroke" stroke-linejoin="round">Thessaloniki Port</text>
<text x="343.3" y="449.4" text-anchor="start" font-size="12.3" fill="#fff" stroke="#222" stroke-width="2.1" paint-order="stroke" stroke-linejoin="round">Crane Monument</text>
<text x="343.3" y="460.1" text-anchor="start" font-size="10.400" fill="#fff" stroke="#222" stroke-width="1.9" paint-order="stroke" stroke-linejoin="round">Γερανός Λιμένα</text>
<text x="343.3" y="469.7" text-anchor="start" font-size="10.400" fill="#fff" stroke="#222" stroke-width="1.9" paint-order="stroke" stroke-linejoin="round">Θεσσαλονίκης</text>
<text x="8.500" y="522.500" font-size="16.300" fill="#fff" stroke="#fff" stroke-width=".55" letter-spacing="-.2">Google</text>
</svg>
<div class="abs" style="left:9px;top:9px;width:149px;height:35px;background:#fff;border-radius:2px;box-shadow:0 1px 4px -1px rgba(0,0,0,.3)"></div>
<div class="abs" style="left:67.500px;top:11px;width:1px;height:31px;background:#ececec"></div>
<div class="t" style="left:38.500px;top:26.500px;transform:translate(-50%,-50%);font-size:16px;color:#565656">Map</div>
<div class="t" style="left:114px;top:26.500px;transform:translate(-50%,-50%);font-size:16px;color:#000;-webkit-text-stroke:.4px #000">Satellite</div>
<div class="abs" style="left:1055px;top:9px;width:35px;height:35px;background:#fff;border-radius:2px;box-shadow:0 1px 4px -1px rgba(0,0,0,.3)"></div>
<svg style="left:1065px;top:19px" width="15" height="15" viewBox="0 0 15 15"><path d="M0 5 V0 H5 V2 H2 V5Z M10 0 H15 V5 H13 V2 H10Z M0 10 H2 V13 H5 V15 H0Z M13 10 H15 V15 H10 V13 H13Z" fill="#666"/></svg>
<div class="abs" style="left:1055px;top:274px;width:35px;height:108px;background:#fff;border-radius:2px;box-shadow:0 1px 4px -1px rgba(0,0,0,.3)"></div>
<div class="abs" style="left:1060px;top:309.500px;width:25px;height:1px;background:#e6e6e6"></div><div class="abs" style="left:1060px;top:345.500px;width:25px;height:1px;background:#e6e6e6"></div>
<svg style="left:1064px;top:283px" width="17" height="18" viewBox="0 0 17 18"><path d="M8.500 3.500 A6.200 6.200 0 1 0 14.700 9.700" fill="none" stroke="#666" stroke-width="1.600" stroke-dasharray="2.200 1.700"/><path d="M8.500 3.500 A6.200 6.200 0 0 0 2.300 9.700 A6.200 6.200 0 0 0 5 14.800" fill="none" stroke="#666" stroke-width="1.600"/><path d="M8 0 L12 3.500 L8 7Z" fill="#666"/></svg>
<svg style="left:1064px;top:319px" width="17" height="18" viewBox="0 0 17 18"><path d="M8.500 3.500 A6.200 6.200 0 1 1 2.300 9.700" fill="none" stroke="#666" stroke-width="1.600" stroke-dasharray="2.200 1.700"/><path d="M8.500 3.500 A6.200 6.200 0 0 1 14.700 9.700 A6.200 6.200 0 0 1 12 14.800" fill="none" stroke="#666" stroke-width="1.600"/><path d="M9 0 L5 3.500 L9 7Z" fill="#666"/></svg>
<svg style="left:1064.500px;top:359px" width="16" height="10" viewBox="0 0 16 10"><path d="M3 0 H7.400 V4.300 H1.400Z M8.600 0 H13 L14.600 4.300 H8.600Z M1.100 5.500 H7.400 V10 H0Z M8.600 5.500 H14.900 L16 10 H8.600Z" fill="#666"/></svg>
<div class="abs" style="left:1055px;top:409.500px;width:35px;height:35px;background:#fff;border-radius:50%;box-shadow:0 1px 4px -1px rgba(0,0,0,.3)"></div>
<svg style="left:1062.500px;top:417px" width="20" height="20" viewBox="0 0 20 20"><path d="M7 4 L10 1 L13 4 M16 7 L19 10 L16 13 M13 16 L10 19 L7 16 M4 13 L1 10 L4 7" fill="none" stroke="#666" stroke-width="1.700"/></svg>
<div class="abs" style="left:1055px;top:472.500px;width:35px;height:36px;background:#fff;border-radius:2px;box-shadow:0 1px 4px -1px rgba(0,0,0,.3)"></div>
<svg style="left:1064.500px;top:478px" width="16" height="26" viewBox="0 0 16 26"><circle cx="8" cy="4.600" r="4.400" fill="#f9b916" stroke="#e6a100" stroke-width=".5"/><path d="M3 10 Q8 8.500 13 10 L14.600 17.500 L12.500 18 L11.600 14.500 V24.500 H8.600 V18 H7.400 V24.500 H4.400 V14.500 L3.500 18 L1.400 17.500Z" fill="#f9b916" stroke="#e6a100" stroke-width=".5"/><path d="M5.500 9.600 L8 13 L10.500 9.600Z" fill="#e2672e"/></svg>
<div class="abs" style="left:644px;top:517px;width:455px;height:13px;background:rgba(222,227,231,.79)"></div>
<div class="abs" style="left:979.500px;top:517px;width:1px;height:13px;background:#5d6a72"></div><div class="abs" style="left:1014.500px;top:517px;width:1px;height:13px;background:#5d6a72"></div>
<div class="t" style="left:648.500px;font-size:8.700px;color:#000;top:524.800px;transform:translateY(-50%)">Keyboard shortcuts</div>
<div class="t" style="left:734.700px;font-size:8.700px;color:#000;top:524.800px;transform:translateY(-50%);letter-spacing:.09px">Map data ©2025 Imagery ©2025 Airbus, Maxar Technologies</div>
<div class="t" style="left:985.500px;font-size:8.700px;color:#000;top:524.800px;transform:translateY(-50%)">Terms</div>
<div class="t" style="left:1020.600px;font-size:8.700px;color:#000;top:524.800px;transform:translateY(-50%)">Report a map error</div>
</div>
<div class="card" style="left:1381px;top:207px;width:1144px;height:360px"></div>
<div class="t h2" style="left:1403px;top:247.5px;transform:translateY(-50%);font-weight:normal;font-size:18.3px;letter-spacing:.5px;-webkit-text-stroke:.4px #32325d">Important Alerts (7 days)</div>
<div class="t " style="left:2310.5px;top:244px;transform:translateY(-50%);font-size:11.2px;font-weight:bold;color:#3a3c6e;letter-spacing:.14px">Enable Auto Refresh</div>
<div class="abs" style="left:2428px;top:232px;width:44px;height:21px;border:1px solid #5e72e4;border-radius:11px;background:#fff"></div>
<div class="abs" style="left:2453.500px;top:234.500px;width:16px;height:16px;border-radius:50%;background:#5e72e4"></div>
<svg style="left:2481px;top:232px" width="21" height="21" viewBox="0 0 21 21"><circle cx="10.5" cy="10.5" r="10.5" fill="#525f7f"/><path d="M10.2 4.6 V11.2 L13 13.6" fill="none" stroke="#fff" stroke-width="2.2" stroke-linecap="round" stroke-linejoin="round"/></svg>
<div class="abs" style="left:1403px;top:276px;width:1099px;height:7px;border-radius:4px;background:#e9ecef;overflow:hidden"><div style="width:137px;height:7px;background:#5e72e4"></div></div>
<div class="hline" style="left:1382px;top:300px;width:1142px"></div>
<div class="t th" style="left:1452.5px;top:345px;transform:translateY(-50%);">Service</div>
<div class="t th" style="left:1655px;top:345px;transform:translateY(-50%);">Device</div>
<div class="t th" style="left:1857.3px;top:345px;transform:translateY(-50%);">Type</div>
<div class="t th" style="left:2060px;top:345px;transform:translateY(-50%);">Received</div>
<div class="t th" style="left:2262.5px;top:345px;transform:translateY(-50%);">Status</div>
<div class="rline" style="left:1403px;top:367px;width:1099px"></div>
<div class="rline" style="left:1403px;top:431px;width:1099px"></div>
<div class="rline" style="left:1403px;top:495px;width:1099px"></div>
<svg style="left:1420px;top:393.4px" width="8" height="12" viewBox="0 0 8 12"><path d="M1.4 1.200 L6.2 6 L1.4 10.800" fill="none" stroke="#686868" stroke-width="1.7"/></svg>
<div class="t td" style="left:1452.5px;top:399.7px;transform:translateY(-50%);">iAlertFacility</div>
<div class="t td" style="left:1655px;top:399.7px;transform:translateY(-50%);">51001</div>
<div class="t td up" style="left:1857.3px;top:399.7px;transform:translateY(-50%);">FIRE ALARM</div>
<div class="t td" style="left:2060px;top:399.7px;transform:translateY(-50%);">26-09-2025 13:05:40</div>
<div class="dot" style="left:2263px;top:397.7px;background:#2dce89"></div>
<div class="t st" style="left:2276.3px;top:399.7px;transform:translateY(-50%);">Seen</div>
<svg style="left:2466.3px;top:393.2px" width="8" height="13" viewBox="0 0 8 13"><circle cx="4" cy="4.600" r="3.500" fill="#fa0f1c"/><rect x="3.400" y="7.500" width="1.200" height="4.300" fill="#fa0f1c"/></svg>
<svg style="left:1420px;top:457.2px" width="8" height="12" viewBox="0 0 8 12"><path d="M1.4 1.200 L6.2 6 L1.4 10.800" fill="none" stroke="#686868" stroke-width="1.7"/></svg>
<div class="t td" style="left:1452.5px;top:463.5px;transform:translateY(-50%);">iAlertFacility</div>
<div class="t td" style="left:1655px;top:463.5px;transform:translateY(-50%);">51001</div>
<div class="t td up" style="left:1857.3px;top:463.5px;transform:translateY(-50%);">PANIC ALARM</div>
<div class="t td" style="left:2060px;top:463.5px;transform:translateY(-50%);">26-09-2025 13:05:29</div>
<div class="dot" style="left:2263px;top:461.5px;background:#2dce89"></div>
<div class="t st" style="left:2276.3px;top:463.5px;transform:translateY(-50%);">Seen</div>
<svg style="left:2466.3px;top:457.0px" width="8" height="13" viewBox="0 0 8 13"><circle cx="4" cy="4.600" r="3.500" fill="#fa0f1c"/><rect x="3.400" y="7.500" width="1.200" height="4.300" fill="#fa0f1c"/></svg>
<div class="t pg" style="left:2145px;top:520.7px;transform:translateY(-50%);">Rows per page:</div><div class="t pg" style="left:2237px;top:521.7px;transform:translateY(-50%);color:#616161">7</div><svg style="left:2257.5px;top:519.4000000000001px" width="9" height="5" viewBox="0 0 9 5"><path d="M0 0 H9 L4.5 4.6Z" fill="#616161"/></svg><div class="t pg" style="left:2293px;top:520.7px;transform:translateY(-50%);">1-2 of 2</div><svg style="left:2365px;top:514.7px" width="13" height="12" viewBox="0 0 13 12"><rect x="1" y="0.800" width="1.500" height="10.400" fill="#c4c4c4"/><path d="M11 1.200 L6.200 6 L11 10.800" fill="none" stroke="#c4c4c4" stroke-width="1.750"/></svg><svg style="left:2402px;top:514.7px" width="9" height="12" viewBox="0 0 9 12"><path d="M7 1.200 L2.200 6 L7 10.800" fill="none" stroke="#c4c4c4" stroke-width="1.750"/></svg><svg style="left:2438px;top:514.7px" width="9" height="12" viewBox="0 0 9 12"><path d="M2 1.200 L6.800 6 L2 10.800" fill="none" stroke="#c4c4c4" stroke-width="1.750"/></svg><svg style="left:2471px;top:514.7px" width="13" height="12" viewBox="0 0 13 12"><rect x="10.500" y="0.800" width="1.500" height="10.400" fill="#c4c4c4"/><path d="M2 1.200 L6.800 6 L2 10.800" fill="none" stroke="#c4c4c4" stroke-width="1.750"/></svg>
<div class="card" style="left:211px;top:854px;width:1143px;height:595px"></div>
<div class="t h2" style="left:233px;top:895px;transform:translateY(-50%);font-weight:normal;font-size:18.3px;letter-spacing:-.02px;-webkit-text-stroke:.4px #32325d">Live Camera Feed</div>
<div class="hline" style="left:212px;top:933px;width:1141px"></div>
<div class="t " style="left:725px;top:977px;transform:translateY(-50%);font-size:14.700px;color:#212529;letter-spacing:-.05px">Stream Name</div>
<div class="t " style="left:233px;top:1389px;transform:translateY(-50%);font-size:14.5px;color:#525f7f;letter-spacing:.1px">Day:</div>
<div class="abs" style="left:266px;top:1372px;width:124px;height:39.500px;border:1px solid #cad1d7;border-radius:5px;background:#fff"></div>
<div class="t " style="left:280px;top:1392.5px;transform:translateY(-50%);font-size:12.2px;color:#8898aa;letter-spacing:.1px">01 / 10 / 2025</div>
<svg style="left:362px;top:1386px" width="13" height="13" viewBox="0 0 13 13"><rect x="1" y="2" width="11" height="10" rx="1.500" fill="none" stroke="#8898aa" stroke-width="1.200"/><rect x="1" y="2" width="11" height="3" fill="#8898aa"/><rect x="3.300" y=".5" width="1.300" height="2.500" fill="#8898aa"/><rect x="8.400" y=".5" width="1.300" height="2.500" fill="#8898aa"/></svg>
<div class="t " style="left:394px;top:1389px;transform:translateY(-50%);font-size:14.5px;color:#525f7f;letter-spacing:.1px">Time:</div>
<div class="abs" style="left:435px;top:1372px;width:106px;height:39.500px;border:1px solid #cad1d7;border-radius:5px;background:#fff"></div>
<div class="t " style="left:449px;top:1392.5px;transform:translateY(-50%);font-size:12.2px;color:#8898aa;letter-spacing:.2px">11 : 14</div>
<div class="abs" style="left:1074px;top:1372px;width:177px;height:38.500px;border-radius:5px;background:#f7fafc;box-shadow:0 4px 6px rgba(50,50,93,.11),0 1px 3px rgba(0,0,0,.08)"></div>
<div class="t " style="left:1162.5px;top:1391.3px;transform:translateY(-50%);font-size:10.1px;font-weight:bold;color:#212529;letter-spacing:.2px;transform:translate(-50%,-50%)">Go to Date &amp; Time</div>
<div class="abs" style="left:1269px;top:1372px;width:63px;height:38.500px;border-radius:5px;background:#5e72e4;box-shadow:0 4px 6px rgba(50,50,93,.11),0 1px 3px rgba(0,0,0,.08)"></div>
<div class="t " style="left:1300.5px;top:1391.5px;transform:translateY(-50%);font-size:12.300px;font-weight:bold;color:#fff;letter-spacing:.25px;transform:translate(-50%,-50%)">Live</div>
<div class="card" style="left:1380px;top:854px;width:1145px;height:738px"></div>
<div class="t h2" style="left:1403px;top:895.4px;transform:translateY(-50%);font-weight:normal;font-size:18.3px;letter-spacing:.32px;-webkit-text-stroke:.4px #32325d">Your latests alerts (2 days)</div>
<div class="hline" style="left:1382px;top:933.500px;width:1142px"></div>
<div class="t th" style="left:1452.5px;top:978px;transform:translateY(-50%);">Service</div>
<div class="t th" style="left:1663.8px;top:978px;transform:translateY(-50%);">Device</div>
<div class="t th" style="left:1875px;top:978px;transform:translateY(-50%);">Type</div>
<div class="t th" style="left:2086.3px;top:978px;transform:translateY(-50%);">Received</div>
<div class="t th" style="left:2297.6px;top:978px;transform:translateY(-50%);">Status</div>
<div class="rline" style="left:1403px;top:1000.4px;width:1099px"></div>
<div class="rline" style="left:1403px;top:1064.0px;width:1099px"></div>
<div class="rline" style="left:1403px;top:1127.6px;width:1099px"></div>
<div class="rline" style="left:1403px;top:1191.3px;width:1099px"></div>
<div class="rline" style="left:1403px;top:1254.9px;width:1099px"></div>
<div class="rline" style="left:1403px;top:1318.5px;width:1099px"></div>
<div class="rline" style="left:1403px;top:1382.1px;width:1099px"></div>
<div class="rline" style="left:1403px;top:1445.7px;width:1099px"></div>
<svg style="left:1420px;top:1027.0px" width="8" height="12" viewBox="0 0 8 12"><path d="M1.4 1.200 L6.2 6 L1.4 10.800" fill="none" stroke="#686868" stroke-width="1.7"/></svg>
<div class="t td" style="left:1452.5px;top:1033.5px;transform:translateY(-50%);">CM Car Alarm</div>
<div class="t td" style="left:1663.8px;top:1033.5px;transform:translateY(-50%);">2221824901</div>
<div class="t td up" style="left:1875px;top:1033.5px;transform:translateY(-50%);">DEVICE LOCATION</div>
<div class="t td" style="left:2086.3px;top:1026.1px;transform:translateY(-50%);">01-10-2025</div>
<div class="t td" style="left:2086.3px;top:1041.3px;transform:translateY(-50%);">05:07:55</div>
<div class="dot" style="left:2298px;top:1032.0px;background:#2dce89"></div>
<div class="t st" style="left:2311.5px;top:1033.5px;transform:translateY(-50%);">Seen</div>
<svg style="left:1420px;top:1090.62px" width="8" height="12" viewBox="0 0 8 12"><path d="M1.4 1.200 L6.2 6 L1.4 10.800" fill="none" stroke="#686868" stroke-width="1.7"/></svg>
<div class="t td" style="left:1452.5px;top:1097.12px;transform:translateY(-50%);">CM Car Alarm</div>
<div class="t td" style="left:1663.8px;top:1097.12px;transform:translateY(-50%);">2220519341</div>
<div class="t td up" style="left:1875px;top:1097.12px;transform:translateY(-50%);">DEVICE LOCATION</div>
<div class="t td" style="left:2086.3px;top:1089.7199999999998px;transform:translateY(-50%);">01-10-2025</div>
<div class="t td" style="left:2086.3px;top:1104.9199999999998px;transform:translateY(-50%);">02:07:55</div>
<div class="dot" style="left:2298px;top:1095.62px;background:#f5050f"></div>
<div class="t st" style="left:2311.5px;top:1097.12px;transform:translateY(-50%);">Not Seen</div>
<svg style="left:1420px;top:1154.2399999999998px" width="8" height="12" viewBox="0 0 8 12"><path d="M1.4 1.200 L6.2 6 L1.4 10.800" fill="none" stroke="#686868" stroke-width="1.7"/></svg>
<div class="t td" style="left:1452.5px;top:1160.7399999999998px;transform:translateY(-50%);">CM Car Alarm</div>
<div class="t td" style="left:1663.8px;top:1160.7399999999998px;transform:translateY(-50%);">2221824901</div>
<div class="t td up" style="left:1875px;top:1160.7399999999998px;transform:translateY(-50%);">DEVICE LOCATION</div>
<div class="t td" style="left:2086.3px;top:1153.3399999999997px;transform:translateY(-50%);">30-09-2025</div>
<div class="t td" style="left:2086.3px;top:1168.5399999999997px;transform:translateY(-50%);">17:07:55</div>
<div class="dot" style="left:2298px;top:1159.2399999999998px;background:#f5050f"></div>
<div class="t st" style="left:2311.5px;top:1160.7399999999998px;transform:translateY(-50%);">Not Seen</div>
<svg style="left:1420px;top:1217.86px" width="8" height="12" viewBox="0 0 8 12"><path d="M1.4 1.200 L6.2 6 L1.4 10.800" fill="none" stroke="#686868" stroke-width="1.7"/></svg>
<div class="t td" style="left:1452.5px;top:1224.36px;transform:translateY(-50%);">CM Car Alarm</div>
<div class="t td" style="left:1663.8px;top:1224.36px;transform:translateY(-50%);">2220519341</div>
<div class="t td up" style="left:1875px;top:1224.36px;transform:translateY(-50%);">DEVICE LOCATION</div>
<div class="t td" style="left:2086.3px;top:1216.9599999999998px;transform:translateY(-50%);">30-09-2025</div>
<div class="t td" style="left:2086.3px;top:1232.1599999999999px;transform:translateY(-50%);">14:08:25</div>
<div class="dot" style="left:2298px;top:1222.86px;background:#f5050f"></div>
<div class="t st" style="left:2311.5px;top:1224.36px;transform:translateY(-50%);">Not Seen</div>
<svg style="left:1420px;top:1281.4799999999998px" width="8" height="12" viewBox="0 0 8 12"><path d="M1.4 1.200 L6.2 6 L1.4 10.800" fill="none" stroke="#686868" stroke-width="1.7"/></svg>
<div class="t td" style="left:1452.5px;top:1287.9799999999998px;transform:translateY(-50%);">CM Car Alarm</div>
<div class="t td" style="left:1663.8px;top:1287.9799999999998px;transform:translateY(-50%);">2221824901</div>
<div class="t td up" style="left:1875px;top:1287.9799999999998px;transform:translateY(-50%);">DEVICE LOCATION</div>
<div class="t td" style="left:2086.3px;top:1280.5799999999997px;transform:translateY(-50%);">30-09-2025</div>
<div class="t td" style="left:2086.3px;top:1295.7799999999997px;transform:translateY(-50%);">05:07:55</div>
<div class="dot" style="left:2298px;top:1286.4799999999998px;background:#f5050f"></div>
<div class="t st" style="left:2311.5px;top:1287.9799999999998px;transform:translateY(-50%);">Not Seen</div>
<svg style="left:1420px;top:1345.1px" width="8" height="12" viewBox="0 0 8 12"><path d="M1.4 1.200 L6.2 6 L1.4 10.800" fill="none" stroke="#686868" stroke-width="1.7"/></svg>
<div class="t td" style="left:1452.5px;top:1351.6px;transform:translateY(-50%);">CM Car Alarm</div>
<div class="t td" style="left:1663.8px;top:1351.6px;transform:translateY(-50%);">2220519341</div>
<div class="t td up" style="left:1875px;top:1351.6px;transform:translateY(-50%);">DEVICE LOCATION</div>
<div class="t td" style="left:2086.3px;top:1344.1999999999998px;transform:translateY(-50%);">30-09-2025</div>
<div class="t td" style="left:2086.3px;top:1359.3999999999999px;transform:translateY(-50%);">02:07:55</div>
<div class="dot" style="left:2298px;top:1350.1px;background:#f5050f"></div>
<div class="t st" style="left:2311.5px;top:1351.6px;transform:translateY(-50%);">Not Seen</div>
<svg style="left:1420px;top:1408.7199999999998px" width="8" height="12" viewBox="0 0 8 12"><path d="M1.4 1.200 L6.2 6 L1.4 10.800" fill="none" stroke="#686868" stroke-width="1.7"/></svg>
<div class="t td" style="left:1452.5px;top:1415.2199999999998px;transform:translateY(-50%);">CM Car Alarm</div>
<div class="t td" style="left:1663.8px;top:1415.2199999999998px;transform:translateY(-50%);">2221824901</div>
<div class="t td up" style="left:1875px;top:1415.2199999999998px;transform:translateY(-50%);">DEVICE LOCATION</div>
<div class="t td" style="left:2086.3px;top:1407.8199999999997px;transform:translateY(-50%);">29-09-2025</div>
<div class="t td" style="left:2086.3px;top:1423.0199999999998px;transform:translateY(-50%);">17:07:55</div>
<div class="dot" style="left:2298px;top:1413.7199999999998px;background:#f5050f"></div>
<div class="t st" style="left:2311.5px;top:1415.2199999999998px;transform:translateY(-50%);">Not Seen</div>
<div class="t pg" style="left:2145px;top:1471.8px;transform:translateY(-50%);">Rows per page:</div><div class="t pg" style="left:2237px;top:1472.8px;transform:translateY(-50%);color:#616161">10</div><svg style="left:2257.5px;top:1469.0px" width="9" height="5" viewBox="0 0 9 5"><path d="M0 0 H9 L4.5 4.6Z" fill="#616161"/></svg><div class="t pg" style="left:2293px;top:1471.8px;transform:translateY(-50%);">1-7 of 8</div><svg style="left:2365px;top:1465.8px" width="13" height="12" viewBox="0 0 13 12"><rect x="1" y="0.800" width="1.500" height="10.400" fill="#c4c4c4"/><path d="M11 1.200 L6.200 6 L11 10.800" fill="none" stroke="#c4c4c4" stroke-width="1.750"/></svg><svg style="left:2402px;top:1465.8px" width="9" height="12" viewBox="0 0 9 12"><path d="M7 1.200 L2.200 6 L7 10.800" fill="none" stroke="#c4c4c4" stroke-width="1.750"/></svg><svg style="left:2438px;top:1465.8px" width="9" height="12" viewBox="0 0 9 12"><path d="M2 1.200 L6.800 6 L2 10.800" fill="none" stroke="#3c3c3c" stroke-width="1.750"/></svg><svg style="left:2471px;top:1465.8px" width="13" height="12" viewBox="0 0 13 12"><rect x="10.500" y="0.800" width="1.500" height="10.400" fill="#3c3c3c"/><path d="M2 1.200 L6.800 6 L2 10.800" fill="none" stroke="#3c3c3c" stroke-width="1.750"/></svg>
<div class="abs" style="left:1875px;top:1513px;width:156px;height:40px;border-radius:5px;background:#f7fafc;box-shadow:0 4px 6px rgba(50,50,93,.11),0 1px 3px rgba(0,0,0,.08)"></div>
<div class="t " style="left:1953px;top:1533.2px;transform:translateY(-50%);font-size:11.900px;font-weight:bold;color:#32325d;letter-spacing:.35px;transform:translate(-50%,-50%)">SEE MORE ALERTS</div>
<div class="t " style="left:211px;top:1663px;transform:translateY(-50%);font-size:12.200px;color:#8898aa;letter-spacing:.1px">© 2025</div>
<div class="t " style="left:259.5px;top:1663px;transform:translateY(-50%);font-size:12.200px;font-weight:bold;color:#5e72e4;letter-spacing:.1px">Almooond Ltd</div>
<div class="t " style="left:2524.5px;top:1663px;transform:translateY(-50%);font-size:12.300px;color:#8898aa;letter-spacing:.15px;transform:translate(-100%,-50%)">Privacy Policy</div>
</body></html>
